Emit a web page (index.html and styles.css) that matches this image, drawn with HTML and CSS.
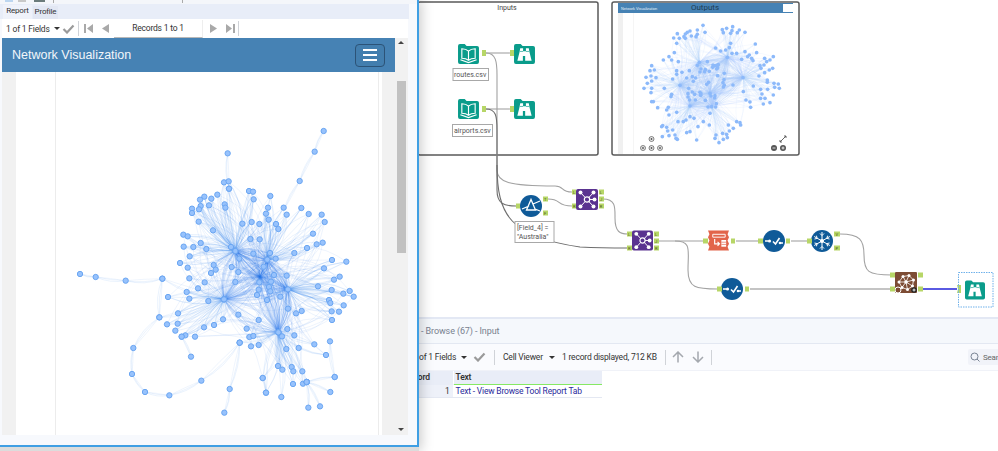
FILE: index.html
```html
<!DOCTYPE html>
<html lang="en">
<head>
<meta charset="utf-8">
<title>Network Visualization</title>
<link rel="stylesheet" href="styles.css">
</head>
<body>
<div class="stage">
  <main class="designer">
    <svg class="canvas" width="998" height="317" viewBox="0 0 998 317">
      <defs>
        <symbol id="book" viewBox="0 0 22 21">
          <path d="M0 2a2 2 0 0 1 2-2h5l2 2h11a2 2 0 0 1 2 2v15a2 2 0 0 1-2 2H2a2 2 0 0 1-2-2z" fill="#0a9c8b"/>
          <path d="M11 7.500C9 5.500 6.500 5 4 5v10c2.500 0 5 .5 7 2 2-1.500 4.500-2 7-2V5c-2.500 0-5 .5-7 2.500zM11 7.500V17M2.500 16.500l8.500 3 8.500-3" fill="none" stroke="#fff" stroke-width="1.200"/>
        </symbol>
        <symbol id="binoc" viewBox="0 0 22 21">
          <path d="M0 2a2 2 0 0 1 2-2h5l2 2h11a2 2 0 0 1 2 2v15a2 2 0 0 1-2 2H2a2 2 0 0 1-2-2z" fill="#0a9c8b"/>
          <path d="M6.500 4.500h3v3h3v-3h3l.7 4 2.300 9h-6.800v-5h-2.400v5H3.500l2.300-9z" fill="#fff"/>
          <path d="M6.200 7.800h3.300M12.500 7.800h3.300" stroke="#0a9c8b" stroke-width=".7"/>
        </symbol>
        <symbol id="join" viewBox="0 0 22 21">
          <rect width="22" height="21" rx="2" fill="#5a3390"/>
          <path d="M5 4l6 6.500L17 4M5 17l6-6.500L17 17M11 10.500h7" stroke="#fff" stroke-width="1" fill="none"/>
          <circle cx="11" cy="10.500" r="2.700" fill="#5a3390" stroke="#fff" stroke-width="1.200"/>
          <g fill="#fff"><circle cx="4.500" cy="3.500" r="2"/><circle cx="17.500" cy="3.500" r="2"/><circle cx="4.500" cy="17.500" r="2"/><circle cx="17.500" cy="17.500" r="2"/><circle cx="18.500" cy="10.500" r="2"/></g>
        </symbol>
        <symbol id="filter" viewBox="0 0 22 22">
          <circle cx="11" cy="11" r="11" fill="#0f5a98"/>
          <path d="M11 4.500L6.500 15h9zM2 14l7-3M13 9l7-3M15 14l5 2" fill="none" stroke="#fff" stroke-width="1.300"/>
        </symbol>
        <symbol id="check" viewBox="0 0 22 22">
          <circle cx="11" cy="11" r="11" fill="#0f5a98"/>
          <path d="M2 11h3M10 11.500l2.500 2.500 4-6M17 13h3" fill="none" stroke="#fff" stroke-width="1.600"/>
          <circle cx="6.500" cy="11" r="1.600" fill="#fff"/>
          <circle cx="17" cy="13" r="1.300" fill="#fff"/>
        </symbol>
        <symbol id="snow" viewBox="0 0 22 22">
          <circle cx="11" cy="11" r="11" fill="#0f5a98"/>
          <path d="M11 2v18M3.200 6.500l15.600 9M3.200 15.500l15.600-9M9 3.500l2 2 2-2M9 18.500l2-2 2 2M3.500 9l2.700-.6-.8-2.700M18.500 13l-2.700.6.8 2.700M3.500 13l2.700.6-.8 2.700M18.500 9l-2.700-.6.8-2.700" fill="none" stroke="#fff" stroke-width="1"/>
          <circle cx="11" cy="11" r="2" fill="#fff"/>
        </symbol>
        <symbol id="layout" viewBox="0 0 22 21">
          <path d="M0 0h22l-1.500 4 1.500 3-1.500 3.500L22 14l-1.500 3 1.500 4H0l1.500-4L0 14l1.500-3.500L0 7l1.500-3z" fill="#e2654b"/>
          <path d="M5 4h13v3H5z" fill="none" stroke="#fff" stroke-width="1"/>
          <path d="M7 9v5h5M10 12l2 2-2 2" fill="none" stroke="#fff" stroke-width="1.200"/>
          <path d="M14 10h5v7h-5z" fill="#fff"/>
          <path d="M14 12.300h5M14 14.600h5" stroke="#e2654b" stroke-width=".7"/>
        </symbol>
        <symbol id="net" viewBox="0 0 22 21">
          <rect width="22" height="21" rx="1" fill="#7d4c34"/>
          <path d="M4 10L8 4.500 14 3.500 18.500 8 17.500 14 12.500 17.500 7 15.500zM8 4.500L11 10 17.500 14M14 3.500L11 10 7 15.500M4 10h7l7.500-2M12.500 17.500L11 10" fill="none" stroke="#fff" stroke-width=".8"/>
          <g fill="#fff"><circle cx="4" cy="10" r="1.500"/><circle cx="8" cy="4.500" r="1.500"/><circle cx="14" cy="3.500" r="1.500"/><circle cx="18.500" cy="8" r="1.500"/><circle cx="17.500" cy="14" r="1.500"/><circle cx="12.500" cy="17.500" r="1.500"/><circle cx="7" cy="15.500" r="1.500"/><circle cx="11" cy="10" r="1.800"/></g>
        </symbol>
      </defs>

      <rect class="box" x="418" y="2" width="180" height="153" rx="2"/>
      <text class="box-title" x="507" y="10" text-anchor="middle">Inputs</text>
      <rect class="box" x="612" y="2" width="187" height="153" rx="2"/>

      <rect class="thumb-gutter" x="618" y="13" width="5" height="141"/>
      <rect class="thumb-line" x="633" y="13" width=".6" height="141"/>
      <rect class="thumb-bar" x="618" y="3" width="175" height="10"/>
      <text class="thumb-brand" x="621" y="9.500">Network Visualization</text>
      <rect class="thumb-menu" x="783" y="4" width="10" height="8"/>
      <text class="box-title dark" x="705" y="10" text-anchor="middle">Outputs</text>
      <g id="thumbGraph" transform="translate(610 0) scale(.3333)"></g>
      <g class="thumb-ctl">
        <circle cx="651.500" cy="139" r="2.500"/><circle cx="643" cy="148" r="2.500"/><circle cx="651.500" cy="148" r="2.500"/><circle cx="660" cy="148" r="2.500"/>
      </g>
      <g class="thumb-dots"><circle cx="651.500" cy="139" r=".9"/><circle cx="643" cy="148" r=".9"/><circle cx="651.500" cy="148" r=".9"/><circle cx="660" cy="148" r=".9"/></g>
      <path class="thumb-arrow" d="M780 142l6-6M780 140v2h2M786 138v-2h-2"/>
      <circle class="thumb-black" cx="774" cy="148" r="3"/><circle class="thumb-black" cx="783" cy="148" r="3"/>
      <path class="thumb-plus" d="M772.500 148h3M781.500 148h3M783 146.500v3"/>

      <g class="wire">
        <path d="M486 53H510"/>
        <path d="M486 109H510"/>
        <path d="M486 53C496 53 497 62 497 75V170C497 182 508 186 555 186C565 186 560 192 572 192"/>
        <path class="dark" d="M486 109C496 109 497 116 497 130V190C497 204 504 206 516 206"/>
        <path class="dark" d="M497 165C497 215 510 237 580 247Q600 248 628 248"/>
        <path d="M548 199C562 199 556 206 572 206"/>
        <path d="M603 199C616 199 615 208 615 218C615 232 620 234 628 234"/>
        <path d="M659 241H704"/>
        <path d="M675 241C692 241 688 250 688 270C688 288 696 289 718 289"/>
        <path d="M736 241H759"/>
        <path d="M791 241H808"/>
        <path d="M840 234C860 234 864 240 864 255C864 272 868 275 892 275"/>
        <path class="thick" d="M750 289H892"/>
      </g>
      <path class="wire-active" d="M922 289H957"/>

      <use href="#book" x="458" y="44" width="21" height="20"/>
      <use href="#binoc" x="514" y="44" width="21" height="20"/>
      <use href="#book" x="458" y="99" width="21" height="20"/>
      <use href="#binoc" x="514" y="99" width="21" height="20"/>
      <rect class="note" x="453" y="68.500" width="35.500" height="12"/>
      <text class="note-text" x="454" y="77">routes.csv</text>
      <rect class="note" x="452.500" y="124.500" width="40" height="12"/>
      <text class="note-text" x="454" y="133">airports.csv</text>

      <use href="#join" x="576" y="189" width="22" height="21"/>
      <use href="#filter" x="520" y="195" width="22" height="22"/>
      <rect class="note" x="515" y="221.500" width="39" height="21"/>
      <text class="note-text" x="517" y="230">[Field_4] =</text>
      <text class="note-text" x="517" y="239">"Australia"</text>
      <use href="#join" x="632" y="230" width="21" height="21"/>
      <use href="#layout" x="708" y="230" width="21" height="21"/>
      <use href="#check" x="763" y="230" width="22" height="22"/>
      <use href="#snow" x="811" y="230" width="22" height="22"/>
      <use href="#check" x="721" y="278" width="22" height="22"/>
      <use href="#net" x="895" y="272" width="22" height="21"/>
      <circle class="net-ring" cx="898" cy="290" r="3"/>
      <circle class="net-plus" cx="914" cy="290" r="2.800"/>
      <path class="net-cross" d="M912.500 290h3M914 288.500v3"/>

      <g class="anchors">
        <rect x="482" y="50" width="4" height="6"/><rect x="510" y="50" width="4" height="6"/>
        <rect x="482" y="106" width="4" height="6"/><rect x="510" y="106" width="4" height="6"/>
        <rect x="572" y="189.500" width="4" height="5"/><rect x="572" y="203.500" width="4" height="5"/>
        <rect x="599" y="189.500" width="5" height="5"/><rect x="599" y="196.500" width="5" height="5"/><rect x="599" y="203.500" width="5" height="5"/>
        <rect x="516" y="203.500" width="4" height="5"/><rect x="543" y="196.500" width="5" height="5"/><rect x="543" y="210.500" width="5" height="5"/>
        <rect x="627" y="231.500" width="5" height="5"/><rect x="627" y="245.500" width="5" height="5"/>
        <rect x="654" y="231.500" width="5" height="5"/><rect x="654" y="238.500" width="5" height="5"/><rect x="654" y="245.500" width="5" height="5"/>
        <rect x="703" y="238.500" width="5" height="5"/><rect x="731" y="238.500" width="4" height="5"/>
        <rect x="758" y="238.500" width="5" height="5"/><rect x="786" y="238.500" width="4" height="5"/>
        <rect x="807" y="238.500" width="5" height="5"/><rect x="834" y="231.500" width="6" height="5"/><rect x="834" y="245.500" width="6" height="5"/>
        <rect x="717" y="286.500" width="5" height="5"/><rect x="745" y="286.500" width="4" height="5"/>
        <rect x="890" y="272.500" width="5" height="5"/><rect x="890" y="286.500" width="5" height="5"/>
        <rect x="918" y="272.500" width="5" height="5"/><rect x="918" y="286.500" width="5" height="5"/>
        <path d="M957 285h4v8h-4l1-4z"/>
      </g>
      <g class="anchor-text">
        <text x="599.800" y="193.800">L</text><text x="600" y="200.800">J</text><text x="599.800" y="207.800">R</text>
        <text x="655" y="235.800">L</text><text x="655" y="242.800">J</text><text x="655" y="249.800">R</text>
        <text x="544" y="200.800">T</text><text x="544" y="214.800">F</text>
        <text x="835.500" y="235.800">V</text><text x="835.500" y="249.800">P</text>
        <text x="573" y="193.800">L</text><text x="573" y="207.800">R</text>
        <text x="628" y="235.800">L</text><text x="628" y="249.800">R</text>
      </g>

      <rect class="selected" x="958.500" y="272.500" width="34.500" height="34.500"/>
      <use href="#binoc" x="965" y="280" width="20" height="20"/>
    </svg>
  </main>

  <section class="results">
    <div class="results-title">- Browse (67) - Input</div>
    <div class="results-bar">
      <span class="fields">of 1 Fields</span>
      <span class="caret caret-a"></span>
      <svg class="tick tick-a" width="13" height="10" viewBox="0 0 13 10"><path d="M1.500 5l3.500 3.500L11.500 1.500"/></svg>
      <span class="sep sep-a"></span>
      <span class="viewer">Cell Viewer</span>
      <span class="caret caret-b"></span>
      <span class="count">1 record displayed, 712 KB</span>
      <span class="sep sep-b"></span>
      <svg class="arrow arrow-up" width="12" height="12" viewBox="0 0 12 12"><path d="M6 11.500V1M1 6l5-5 5 5"/></svg>
      <svg class="arrow arrow-down" width="12" height="12" viewBox="0 0 12 12"><path d="M6 .5V11M1 6l5 5 5-5"/></svg>
      <span class="sep sep-c"></span>
      <div class="search">
        <svg width="10" height="10" viewBox="0 0 10 10"><circle cx="4.500" cy="4.500" r="3.500"/><path d="M7 7l2.500 2.500"/></svg>
        <span>Sear</span>
      </div>
    </div>
    <table class="grid">
      <thead><tr><th class="col-rec">Record</th><th class="col-text">Text</th></tr></thead>
      <tbody><tr><td class="col-rec num">1</td><td class="col-text link">Text - View Browse Tool Report Tab</td></tr></tbody>
    </table>
  </section>

  <div class="desk">
    <div class="win">
      <div class="win-strip">
        <span class="chip chip-a"></span><span class="chip chip-b"></span><span class="chip chip-c"></span>
        <span class="strip-field strip-one"></span><span class="strip-field strip-two"></span>
      </div>
      <div class="tabs">
        <span class="tab active">Report</span>
        <span class="tab">Profile</span>
      </div>
      <div class="win-bar">
        <span class="win-fields">1 of 1 Fields</span>
        <span class="caret win-caret"></span>
        <svg class="tick win-tick" width="13" height="10" viewBox="0 0 13 10"><path d="M1.500 5l3.500 3.500L11.500 1.500"/></svg>
        <span class="sep win-sep1"></span>
        <svg class="pager pg-first" width="10" height="9" viewBox="0 0 10 9"><path d="M0 0h2v9H0zM9 0v9L3 4.500z"/></svg>
        <svg class="pager pg-prev" width="7" height="9" viewBox="0 0 7 9"><path d="M7 0v9L0 4.500z"/></svg>
        <span class="records">Records 1 to 1</span>
        <svg class="pager pg-next" width="7" height="9" viewBox="0 0 7 9"><path d="M0 0v9l7-4.500z"/></svg>
        <svg class="pager pg-last" width="10" height="9" viewBox="0 0 10 9"><path d="M1 0v9l6-4.500zM8 0h2v9H8z"/></svg>
        <span class="sep win-sep2"></span>
      </div>
      <div class="frame">
        <div class="page">
          <header class="navbar">
            <span class="brand">Network Visualization</span>
            <button class="burger" type="button" aria-label="Menu"><i></i><i></i><i></i></button>
          </header>
          <div class="page-body">
            <div class="gutter"></div>
            <div class="margin"></div>
            <div class="plot">
              <svg id="mainGraph" class="graph" width="300" height="300" viewBox="0 0 900 900"></svg>
            </div>
            <div class="margin-right"></div>
            <div class="gutter gutter-right"></div>
          </div>
        </div>
        <div class="scroll">
          <span class="scroll-up"></span>
          <span class="thumb"></span>
          <span class="scroll-down"></span>
        </div>
      </div>
    </div>
    <div class="under"></div>
  </div>
</div>
<script src="graph.js"></script>
</body>
</html>
```
FILE: styles.css
```css
* { box-sizing: border-box; }
html, body { margin: 0; padding: 0; background: #fff; }
body { font-family: Roboto, "Open Sans", sans-serif; color: #333; overflow: hidden; }
.stage { position: relative; width: 998px; height: 451px; overflow: hidden; }

/* designer canvas */
.designer { height: 317px; background: #fff; }
.canvas { display: block; }
.box { fill: #fff; stroke: #5a5a5a; stroke-width: 1.500; }
.box-title { font: 7px Roboto, sans-serif; fill: #444; }
.box-title.dark { font-size: 8px; fill: #1d3c55; }
.thumb-gutter { fill: #f0f0f0; }
.thumb-line { fill: #eee; }
.thumb-bar { fill: #4682b4; }
.thumb-brand { font: 3.800px "Liberation Sans", sans-serif; fill: #e8f0f8; }
.thumb-menu { fill: #fff; }
.thumb-ctl { fill: #e8e8e8; stroke: #555; stroke-width: .7; }
.thumb-dots { fill: #555; }
.thumb-arrow { fill: none; stroke: #555; stroke-width: .9; }
.thumb-black { fill: #555; }
.thumb-plus { stroke: #fff; stroke-width: .8; }
.wire { fill: none; stroke: #a2a2a2; stroke-width: 1.100; }
.wire .dark { stroke: #6e6e6e; }
.wire .thick { stroke: #b0b0b0; stroke-width: 1.700; }
.wire-active { stroke: #5a5ae2; stroke-width: 2; fill: none; }
.note { fill: #fff; stroke: #a8a8a8; stroke-width: 1; }
.note-text { font: 7px Roboto, sans-serif; fill: #555; }
.anchors { fill: #b7d667; }
.anchor-text { font: 4px Roboto, sans-serif; fill: #4c5a22; }
.net-ring { fill: none; stroke: #fff; stroke-width: 1; }
.net-plus { fill: #222; }
.net-cross { stroke: #fff; stroke-width: .9; }
.selected { fill: none; stroke: #6fb1ea; stroke-width: 1; stroke-dasharray: 1.500 1; }

/* results */
.results { height: 134px; font-size: 8.500px; letter-spacing: -.2px; white-space: nowrap; }
.results-title { height: 27px; padding: 5px 0 0 421px; background: #f5f8fc; border-top: 2px solid #e3e8f4; border-bottom: 1px solid #e3e8f2; color: #78818f; line-height: 14px; font-size: 9px; letter-spacing: -.1px; }
.results-bar { display: flex; align-items: center; height: 27px; padding-left: 419px; background: #fafbfe; border-bottom: 1px solid #f0f2f8; }
.results-bar > * { flex: none; }
.fields { width: 42px; color: #333; }
.caret { display: block; width: 0; height: 0; border: 3px solid transparent; border-top: 3px solid #333; border-bottom: 0; }
.caret-a { margin-right: 6px; }
.tick path { fill: none; stroke: #9a9a9a; stroke-width: 2.200; }
.tick-a { margin-right: 8px; }
.sep { display: block; width: 1px; height: 15px; background: #d0d3d8; }
.sep-a { margin-right: 8px; }
.viewer { width: 46px; }
.caret-b { margin-right: 7px; }
.count { width: 103px; }
.sep-b { margin-right: 6px; }
.arrow path { fill: none; stroke: #a4a8ae; stroke-width: 1.500; }
.arrow-up { margin-right: 8px; }
.arrow-down { margin-right: 7px; }
.search { display: flex; align-items: center; gap: 3px; margin-left: auto; width: 30px; height: 16px; padding-left: 2px; background: #f1f3f9; border-radius: 2px 0 0 2px; color: #666; font-size: 8px; }
.search svg { flex: none; }
.search circle, .search path { fill: none; stroke: #7a8494; stroke-width: 1; }
.grid { border-collapse: collapse; table-layout: fixed; width: 212px; margin-left: 390px; line-height: 12px; }
.grid th { height: 13px; padding: 0 0 0 2px; text-align: left; font-weight: 600; color: #333; background: #e9edf7; border-bottom: 1px solid #86e864; }
.grid td { height: 13px; padding: 0 2px 0 2px; background: #fff; border-bottom: 1px solid #e4e8f2; }
.grid .col-rec { width: 63px; border-right: 1px solid #fff; }
.grid th.col-rec { padding-left: 14px; border-bottom-color: #e9edf7; }
.grid .col-text { width: 149px; }
.grid .num { text-align: right; padding-right: 3px; background: #eef1f9; }
.grid .link { color: #2a2a9c; }

/* floating browse window */
.desk { position: absolute; left: 0; top: 0; width: 419px; height: 451px; display: flex; flex-direction: column; box-shadow: 2px 0 12px rgba(0, 0, 0, .22); }
.win { height: 447px; background: #f7f9fd; border-right: 2px solid #3f9fe4; border-bottom: 2px solid #3f9fe4; display: flex; flex-direction: column; padding-bottom: 10px; }
.under { height: 4px; background: #dcdcdc; }
.win-strip { display: flex; height: 4px; background: #f4f6fa; align-items: stretch; }
.chip { display: block; width: 8px; height: 2px; margin-right: 5px; }
.chip-a { background: #bcd6f0; margin-left: 5px; }
.chip-b { background: #c8c8c8; }
.chip-c { background: #6b7b7b; width: 11px; margin-left: 3px; }
.strip-field { display: block; width: 1px; height: 3px; background: #aaa; }
.strip-one { margin-left: 3px; }
.strip-two { margin-left: 128px; }
.tabs { display: flex; align-items: flex-end; height: 15px; width: 409px; padding-left: 3px; background: #e8edf8; }
.tab { display: block; height: 13px; width: 25px; text-align: center; font-size: 8px; letter-spacing: -.2px; line-height: 12px; color: #333; background: #e2e7f3; }
.tab.active { height: 14px; width: 29px; background: #eff2fa; margin-right: 1px; }
.win-bar { display: flex; align-items: center; height: 19px; width: 406px; margin-left: 2px; padding-left: 4px; background: #fff; font-size: 8.500px; letter-spacing: -.2px; color: #333; white-space: nowrap; }
.win-bar > * { flex: none; }
.win-fields { width: 45px; }
.win-caret { margin-left: 3px; margin-right: 2px; }
.win-tick { margin-right: 3px; }
.win-sep1 { margin-right: 5px; }
.win-sep2 { margin-left: 3px; }
.pager { display: block; fill: #a9a9a9; }
.pg-first { margin-right: 8px; }
.pg-prev { margin-right: 5px; }
.records { width: 89px; height: 18px; line-height: 17px; text-align: center; border-bottom: 1px solid #b8b8b8; border-right: 1px solid #eee; }
.pg-next { margin-left: 7px; margin-right: 8px; }

.frame { display: flex; flex: 1; width: 406px; margin-left: 2px; min-height: 0; }
.page { display: flex; flex-direction: column; width: 393px; background: #fff; }
.navbar { display: flex; align-items: center; justify-content: space-between; height: 34px; padding: 0 10px 0 10px; background: #4682b4; }
.brand { font: 12.500px "Liberation Sans", Arial, sans-serif; color: #f2f6fa; }
.burger { display: flex; flex-direction: column; justify-content: center; gap: 3px; width: 30px; height: 23px; padding: 0 7px; background: #437eae; border: 1px solid #2c5377; border-radius: 4px; }
.burger i { display: block; height: 2px; background: #fff; }
.page-body { display: flex; flex: 1; min-height: 0; }
.gutter { width: 14px; background: #f1f1f1; }
.margin { width: 40px; border-right: 1px solid #ececec; }
.plot { width: 322px; padding: 48px 0 0 4px; }
.graph { display: block; overflow: visible; }
.margin-right { width: 4px; border-left: 1px solid #ececec; }
.gutter-right { width: 13px; }
.scroll { position: relative; width: 13px; background: #f1f1f1; }
.thumb { position: absolute; left: 2px; top: 43px; width: 9px; height: 172px; background: #c1c1c1; }
.scroll-up, .scroll-down { position: absolute; left: 3px; width: 0; height: 0; border: 3px solid transparent; }
.scroll-up { top: 3px; border-top: 0; border-bottom: 3px solid #444; }
.scroll-down { bottom: 4px; border-bottom: 0; border-top: 3px solid #444; }
```
FILE: graph.js
```js
(function () {
  var NS = 'http://www.w3.org/2000/svg';
  var seed = 17;
  function rnd() { seed = (seed * 16807) % 2147483647; return (seed - 1) / 2147483646; }

  function curve(g, a, b, bend, color, alpha, width) {
    var mx = (a[0] + b[0]) / 2, my = (a[1] + b[1]) / 2;
    var dx = b[0] - a[0], dy = b[1] - a[1];
    var p = document.createElementNS(NS, 'path');
    p.setAttribute('d', 'M' + a[0] + ' ' + a[1] + 'Q' + (mx - dy * bend).toFixed(1) + ' ' + (my + dx * bend).toFixed(1) + ' ' + b[0] + ' ' + b[1]);
    p.setAttribute('fill', 'none');
    p.setAttribute('stroke', color);
    p.setAttribute('stroke-opacity', alpha);
    p.setAttribute('stroke-width', width);
    g.appendChild(p);
  }
  function dot(g, n, r, fill, stroke, sw) {
    var c = document.createElementNS(NS, 'circle');
    c.setAttribute('cx', n[0]); c.setAttribute('cy', n[1]); c.setAttribute('r', r);
    c.setAttribute('fill', fill);
    if (stroke) { c.setAttribute('stroke', stroke); c.setAttribute('stroke-width', sw); }
    g.appendChild(c);
  }
  function near(n, hubs) {
    return hubs.slice().sort(function (a, b) {
      return Math.hypot(a[0] - n[0], a[1] - n[1]) - Math.hypot(b[0] - n[0], b[1] - n[1]);
    });
  }

  /* main network */
  var g1 = document.getElementById('mainGraph');
  var hubs = [[526, 393], [622, 419], [684, 508], [492, 538], [655, 637], [600, 470]];
  var chain = [[[791, 33], [764, 95], [719, 183], [672, 270]],
    [[60, 462], [107, 471], [197, 482], [307, 476], [298, 592], [220, 684], [216, 762], [255, 816], [328, 826], [424, 782], [539, 668]],
    [[493, 878], [509, 807], [539, 668]], [[503, 100], [507, 206]], [[745, 863], [740, 786]], [[780, 859], [740, 786]],
    [[811, 816], [740, 786]], [[824, 771], [740, 786]], [[810, 664], [824, 771]], [[393, 710], [365, 650]], [[307, 476], [492, 538]],
    [[298, 592], [492, 538]], [[539, 668], [655, 637]], [[740, 786], [655, 637]], [[618, 818], [608, 774]], [[664, 831], [655, 637]]];
  var free = [[492,187],[506,184],[507,206],[567,213],[579,215],[581,238],[631,228],[472,224],[454,236],[433,230],[420,239],[422,258],[417,268],[396,266],[396,279],[447,256],[494,253],[496,263],[416,305],[459,331],[547,311],[575,306],[598,312],[624,263],[618,281],[626,299],[648,312],[655,327],[671,263],[680,284],[724,264],[746,282],[785,284],[794,306],[759,341],[741,384],[770,373],[788,368],[703,399],[370,344],[383,349],[422,369],[400,381],[371,380],[439,387],[389,409],[360,429],[383,443],[388,475],[434,487],[414,505],[461,435],[453,459],[467,449],[513,381],[571,357],[599,358],[580,401],[630,399],[647,416],[538,416],[515,441],[535,456],[526,486],[611,440],[642,465],[680,467],[598,487],[627,501],[633,485],[596,509],[591,525],[631,514],[621,540],[661,530],[445,543],[380,516],[388,536],[324,531],[354,580],[321,613],[353,611],[346,632],[376,646],[365,650],[405,650],[432,622],[462,615],[489,598],[535,584],[596,600],[560,626],[568,651],[580,648],[573,679],[596,675],[682,627],[666,649],[703,646],[684,566],[708,580],[725,573],[679,687],[716,684],[763,673],[798,705],[654,738],[667,749],[695,741],[700,754],[727,754],[608,774],[699,792],[729,791],[618,818],[792,445],[816,420],[859,425],[822,479],[839,470],[774,499],[815,510],[850,521],[869,513],[881,530],[807,540],[811,549],[851,556],[815,574],[837,575],[816,600]];
  var COL = '#2b7ce9';
  var i, j, k;
  for (i = 0; i < hubs.length; i++) {
    for (j = i + 1; j < hubs.length; j++) {
      for (k = 0; k < 16; k++) curve(g1, hubs[i], hubs[j], (rnd() - .5) * .8, COL, .2, 1.6);
    }
  }
  free.forEach(function (n) {
    var order = near(n, hubs);
    var inner = Math.hypot(n[0] - 600, n[1] - 470) < 130;
    var own = 3 + Math.floor(rnd() * 2);
    var extra = inner ? 7 : 2;
    var m;
    for (m = 0; m < own; m++) curve(g1, n, order[0], (rnd() - .5) * .55, COL, .18, 1.6);
    for (m = 0; m < extra; m++) curve(g1, n, order[1 + (m % 4)], (rnd() - .5) * .7, COL, .17, 1.5);
  });
  chain.forEach(function (c) {
    for (var m = 0; m + 1 < c.length; m++) {
      curve(g1, c[m], c[m + 1], .05 + rnd() * .06, COL, .16, 1.8);
      curve(g1, c[m], c[m + 1], .12 + rnd() * .06, COL, .16, 1.8);
      curve(g1, c[m], c[m + 1], -.02, COL, .13, 1.8);
    }
  });
  free.concat(hubs.slice(0, 5)).forEach(function (n) { dot(g1, n, 8, '#97c2fc', '#6ba6f2', 3); });
  chain.forEach(function (c) { c.forEach(function (n) { if (n[0] !== 672) dot(g1, n, 8, '#97c2fc', '#6ba6f2', 3); }); });

  /* thumbnail network */
  var g2 = document.getElementById('thumbGraph');
  var thubs = [[268, 187], [399, 233], [210, 256], [240, 318], [305, 320], [300, 280], [352, 172]];
  var tn = [[279,76],[285,97],[262,90],[262,103],[240,93],[232,97],[226,102],[222,110],[202,101],[191,114],[208,115],[200,130],[226,115],[244,108],[258,110],[337,89],[350,85],[340,98],[368,80],[366,92],[382,98],[405,97],[388,90],[362,100],[362,130],[358,143],[436,132],[317,144],[332,153],[347,150],[366,160],[380,160],[405,155],[418,165],[440,158],[425,175],[395,178],[429,182],[413,170],[464,175],[490,170],[480,180],[470,185],[450,197],[462,195],[488,205],[478,210],[453,205],[464,218],[447,228],[472,240],[472,247],[492,250],[505,252],[508,265],[494,262],[473,268],[452,268],[456,282],[452,295],[465,295],[490,285],[480,308],[460,312],[422,322],[408,300],[420,306],[400,275],[430,258],[193,158],[177,170],[185,180],[160,180],[205,185],[125,197],[133,210],[120,212],[138,233],[123,228],[108,232],[125,243],[112,250],[102,265],[125,265],[163,265],[123,278],[125,305],[130,305],[143,323],[175,322],[170,330],[177,345],[200,337],[185,283],[183,290],[188,237],[200,212],[200,223],[216,217],[240,350],[228,360],[204,365],[220,365],[252,355],[280,365],[300,340],[298,375],[264,380],[240,395],[158,377],[155,380],[170,382],[173,393],[188,390],[177,407],[157,410],[195,405],[198,415],[202,418],[230,398],[260,420],[318,405],[315,415],[338,400],[350,403],[352,413],[340,418],[327,428],[355,375],[380,365],[390,368],[392,375],[370,385],[358,393]];
  for (i = 0; i < 45; i++) {
    var ang = rnd() * 6.283, rad = Math.sqrt(rnd()) * 75;
    tn.push([Math.round(295 + Math.cos(ang) * rad), Math.round(255 + Math.sin(ang) * rad * .95)]);
  }
  var TC = '#a6c9fb';
  for (i = 0; i < thubs.length; i++) {
    for (j = i + 1; j < thubs.length; j++) {
      for (k = 0; k < 20; k++) curve(g2, thubs[i], thubs[j], (rnd() - .5) * .8, TC, .32, 1.2);
    }
  }
  tn.forEach(function (n) {
    var order = near(n, thubs);
    curve(g2, n, order[0], (rnd() - .5) * .35, TC, .32, 1.3);
    curve(g2, n, order[0], (rnd() - .5) * .35, TC, .32, 1.3);
    curve(g2, n, order[1], (rnd() - .5) * .4, TC, .26, 1.2);
    curve(g2, n, order[2], (rnd() - .5) * .4, TC, .22, 1.2);
  });
  tn.concat(thubs).forEach(function (n) { dot(g2, n, 5.5, '#8cb9fa'); });
})();
```
